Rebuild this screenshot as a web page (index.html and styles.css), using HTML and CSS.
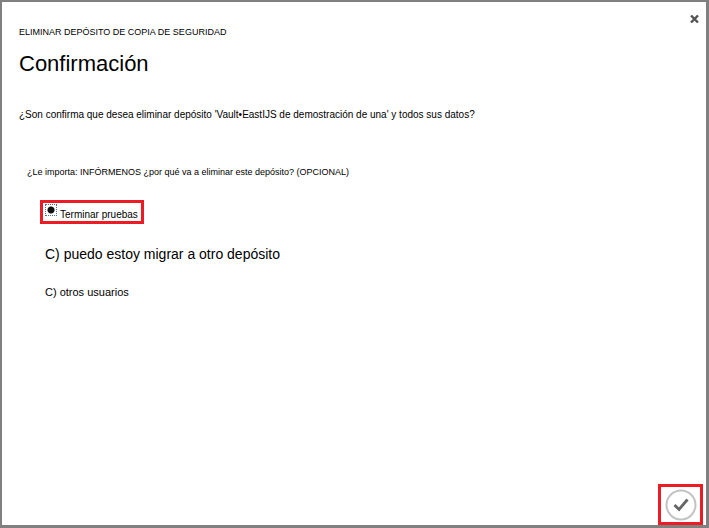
FILE: index.html
```html
<!DOCTYPE html>
<html lang="es">
<head>
<meta charset="utf-8">
<title>Confirmación</title>
<link rel="stylesheet" href="styles.css">
</head>
<body>
<main class="dialog">
  <button class="close" type="button" aria-label="Cerrar">
    <svg width="9" height="8" viewBox="0 0 9 8"><path d="M1 0.5 8 7.5M8 0.5 1 7.5" stroke="#555" stroke-width="2.4" fill="none"/></svg>
  </button>
  <p class="eyebrow">ELIMINAR DEPÓSITO DE COPIA DE SEGURIDAD</p>
  <h1 class="title">Confirmación</h1>
  <p class="question">¿Son confirma que desea eliminar depósito 'Vault•EastIJS de demostración de una' y todos sus datos?</p>
  <form class="form">
    <fieldset class="reasons">
      <legend class="legend">¿Le importa: INFÓRMENOS ¿por qué va a eliminar este depósito? (OPCIONAL)</legend>
      <label class="option marked"><input class="radio" type="radio" name="reason" checked><span class="option-text">Terminar pruebas</span></label>
      <label class="option large"><input class="hidden-radio" type="radio" name="reason">C) puedo estoy migrar a otro depósito</label>
      <label class="option"><input class="hidden-radio" type="radio" name="reason">C) otros usuarios</label>
    </fieldset>
    <button class="accept" type="submit" aria-label="Aceptar">
      <svg width="32" height="32" viewBox="0 0 32 32" fill="none"><circle cx="16" cy="16" r="14.5" stroke="#c3c3c3" stroke-width="2"/><path d="M9.5 16 14 20.5 22.5 10.5" stroke="#666" stroke-width="2.8"/></svg>
    </button>
  </form>
</main>
</body>
</html>
```
FILE: styles.css
```css
* {
  box-sizing: border-box;
}

body {
  margin: 0;
  font-family: "Liberation Sans", Arial, sans-serif;
  font-size: 11px;
  line-height: 16px;
  color: #000;
  background: #fff;
}

.dialog {
  position: relative;
  display: flex;
  flex-direction: column;
  min-height: 100vh;
  padding: 22px 3px 0 17px;
  border: 2px solid #808080;
  border-right-width: 3px;
  border-bottom-width: 3px;
}

.close {
  position: absolute;
  top: 12px;
  right: 6px;
  display: flex;
  padding: 1px;
  border: 0;
  background: none;
}

.eyebrow {
  margin: 0;
  font-size: 9px;
}

.title {
  margin: 8px 0 0;
  font-size: 22px;
  font-weight: 400;
  line-height: 32px;
}

.question {
  margin: 27px 0 0;
  font-size: 10px;
}

.form {
  display: flex;
  flex: 1;
  flex-direction: column;
  justify-content: space-between;
}

.reasons {
  display: flex;
  flex-direction: column;
  align-items: flex-start;
  margin: 41px 0 0;
  padding: 0 8px;
  border: 0;
}

.legend {
  padding: 0;
  font-size: 9px;
}

.option {
  position: relative;
  margin-top: 22px;
  margin-left: 18px;
}

.option.large {
  font-size: 14px;
}

.option.marked {
  display: flex;
  align-items: flex-start;
  gap: 3px;
  height: 24px;
  margin-top: 20px;
  margin-left: 13px;
  padding: 0 3px 0 2px;
  border: 3px solid #ed1c24;
  font-size: 10px;
}

.option-text {
  padding-top: 4px;
}

.radio {
  appearance: none;
  width: 12px;
  height: 12px;
  margin: 1px 0 0;
  border: 1px dotted #4a6f8c;
  background: radial-gradient(circle, #111 0 3px, #fff 4px);
}

.hidden-radio {
  position: absolute;
  opacity: 0;
}

.accept {
  display: flex;
  align-items: center;
  justify-content: center;
  align-self: flex-end;
  width: 45px;
  height: 41px;
  padding: 0;
  border: 3px solid #ed1c24;
  background: none;
}
```
